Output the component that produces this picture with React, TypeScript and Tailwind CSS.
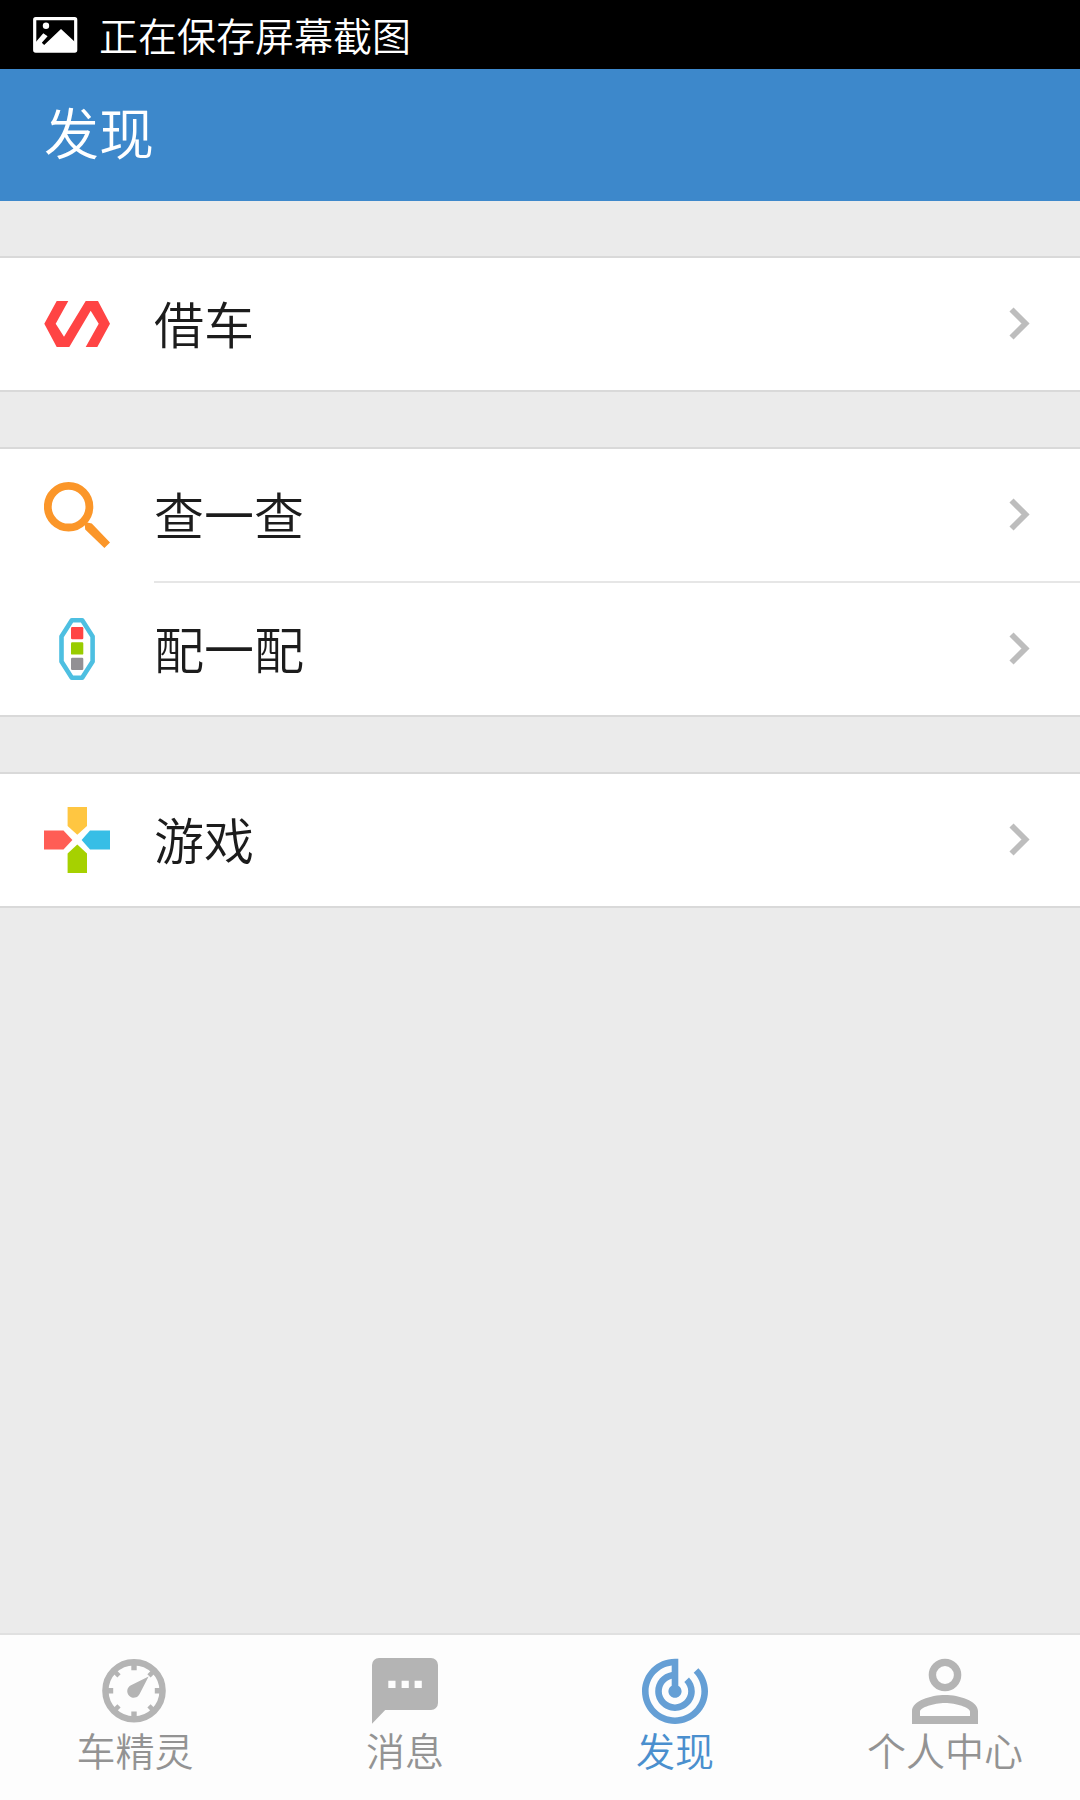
import type { ReactNode } from 'react'
import clsx from 'clsx'

function PictureIcon() {
    return (
        <svg width="45" height="36" viewBox="0 0 45 36" fill="none">
            <rect x="1.7" y="1.7" width="41" height="32.4" rx="1" stroke="white" strokeWidth="3.2" />
            <circle cx="13" cy="8.8" r="3.2" fill="white" />
            <path d="M2 26L10.3 16.3L14.6 19.2L8.8 25.8L11.2 28L28 12L42 25V34H2Z" fill="white" />
        </svg>
    )
}

function BorrowIcon() {
    return (
        <svg width="66" height="66" viewBox="0 0 66 66" fill="#ff4444">
            <path d="M.3 32.7L12.7 10H24.3L11.7 32.7L20 45.7L41.7 10H54L66 32.7L53.3 56H41.7L54.7 32.7L46.7 19.7L25.3 56H12.7Z" />
        </svg>
    )
}

function SearchIcon() {
    return (
        <svg width="66" height="66" viewBox="0 0 66 66">
            <circle cx="24.6" cy="24.7" r="20.8" fill="none" stroke="#fb9629" strokeWidth="7.8" />
            <path d="M39 36L43.3 40.6L47.8 41.4L66 60.6L60.4 66L41.2 47.4L40.8 43L36 39Z" fill="#fb9629" />
        </svg>
    )
}

function MatchIcon() {
    return (
        <svg width="66" height="66" viewBox="0 0 66 66">
            <path d="M27.8 4.2H38.2L48.6 20.5V45.5L38.2 61.8H27.8L17.5 45.5V20.5Z" fill="none" stroke="#4dbfe1" strokeWidth="4.6" strokeLinejoin="round" />
            <rect x="27" y="11" width="12.3" height="12.3" rx="1.2" fill="#ff4444" />
            <rect x="27" y="26.3" width="12.3" height="12.3" rx="1.2" fill="#99cc00" />
            <rect x="27" y="41.7" width="12.3" height="12.3" rx="1.2" fill="#929094" />
        </svg>
    )
}

function GameIcon() {
    return (
        <svg width="66" height="66" viewBox="0 0 66 66">
            <path d="M23.6 0H43V19L33.3 27.8L23.6 19Z" fill="#ffc641" />
            <path d="M0 23.4H19.5L28.4 33L19.5 42.4H0Z" fill="#ff5d55" />
            <path d="M66 23.4H46L37.6 33L46 42.4H66Z" fill="#37bee6" />
            <path d="M23.6 66H43V46.5L33.3 37.6L23.6 46.5Z" fill="#a6d100" />
        </svg>
    )
}

function Chevron() {
    return (
        <svg width="24" height="36" viewBox="0 0 24 36" fill="none">
            <path d="M3.5 3.5L17.5 17.5L3.5 31.5" stroke="#bdbdbd" strokeWidth="5.8" />
        </svg>
    )
}

function GaugeIcon() {
    return (
        <svg width="66" height="66" viewBox="0 0 66 66">
            <circle cx="32" cy="32.8" r="28.6" fill="none" stroke="currentColor" strokeWidth="6.4" />
            <path d="M32 6V12.2M32 53.4V60M5 32.8H11.2M52.8 32.8H59" stroke="currentColor" strokeWidth="5.4" />
            <path d="M13 13.8L17 17.8M51 13.8L47 17.8M13 51.8L17 47.8M51 51.8L47 47.8" stroke="currentColor" strokeWidth="4.6" />
            <path d="M46.6 18.6L37.6 36A6.5 6.5 0 1 1 29 27.3Z" fill="currentColor" />
        </svg>
    )
}

function MessageIcon() {
    return (
        <svg width="66" height="66" viewBox="0 0 66 66">
            <path d="M7 0H59A7 7 0 0 1 66 7V45A7 7 0 0 1 59 52H13.2L0 65.7V7A7 7 0 0 1 7 0Z" fill="currentColor" />
            <path d="M16.3 22.7h7.2v7.2h-7.2zM29.6 22.7h7.2v7.2h-7.2zM42.6 22.7h7.2v7.2h-7.2z" fill="#fdfdfd" />
        </svg>
    )
}

function RadarIcon() {
    return (
        <svg width="66" height="66" viewBox="2 1.8 20 20.2" preserveAspectRatio="none" fill="currentColor">
            <path d="M19.07 4.93l-1.41 1.41C19.1 7.79 20 9.79 20 12c0 4.42-3.58 8-8 8s-8-3.58-8-8c0-4.08 3.05-7.44 7-7.93v2.02C8.16 6.57 6 9.03 6 12c0 3.31 2.69 6 6 6s6-2.69 6-6c0-1.66-.67-3.16-1.76-4.24l-1.41 1.41C15.55 9.9 16 10.9 16 12c0 2.21-1.79 4-4 4s-4-1.79-4-4c0-1.86 1.28-3.41 3-3.86v2.14c-.6.35-1 .98-1 1.72 0 1.1.9 2 2 2s2-.9 2-2c0-.74-.4-1.38-1-1.72V2h-1C6.48 2 2 6.48 2 12s4.48 10 10 10 10-4.48 10-10c0-2.76-1.12-5.26-2.93-7.07z" />
        </svg>
    )
}

function PersonIcon() {
    return (
        <svg width="66" height="66" viewBox="0 0 66 66" fill="currentColor">
            <circle cx="33" cy="17" r="12.6" fill="none" stroke="currentColor" strokeWidth="7.4" />
            <path fillRule="evenodd" d="M0 66V53C0 43 19 37 33 37S66 43 66 53V66ZM8 58H58V53.5C58 49.5 44 45 33 45S8 49.5 8 53.5Z" />
        </svg>
    )
}

function Row({ icon, label }: { icon: ReactNode; label: string }) {
    return (
        <button className="flex h-[132px] w-full items-center pl-11 pr-12 text-left">
            {icon}
            <span className="ml-11 flex-1 pb-[5px] text-[50px] leading-[66px] text-[#1c1c1c]">{label}</span>
            <Chevron />
        </button>
    )
}

function Group({ children }: { children: ReactNode }) {
    return <section className="border-y-2 border-[#d9d9d9] bg-white">{children}</section>
}

const tabs = [
    { label: '车精灵', icon: <GaugeIcon /> },
    { label: '消息', icon: <MessageIcon /> },
    { label: '发现', icon: <RadarIcon />, active: true },
    { label: '个人中心', icon: <PersonIcon /> },
]

export default function App() {
    return (
        <div className="flex h-[1800px] w-[1080px] flex-col overflow-hidden bg-[#ebebeb] font-['Noto_Sans_CJK_SC',sans-serif] font-[350]">
            {/* Status bar */}
            <div className="flex h-[69px] shrink-0 items-center bg-black pl-[33px] text-white">
                <PictureIcon />
                <span className="ml-[21px] pb-0.5 text-[39px] leading-[60px]">正在保存屏幕截图</span>
            </div>

            <header className="flex h-[132px] shrink-0 items-center bg-[#3d88cb] pl-11 text-white">
                <h1 className="pb-2.5 text-[55px] leading-[80px]">发现</h1>
            </header>

            <main className="flex flex-1 flex-col gap-[55px] pt-[55px]">
                <Group>
                    <Row icon={<BorrowIcon />} label="借车" />
                </Group>
                <Group>
                    <Row icon={<SearchIcon />} label="查一查" />
                    <div className="ml-[154px] h-0.5 bg-[#e6e6e6]" />
                    <Row icon={<MatchIcon />} label="配一配" />
                </Group>
                <Group>
                    <Row icon={<GameIcon />} label="游戏" />
                </Group>
            </main>

            {/* Bottom tabs */}
            <nav className="grid h-[167px] shrink-0 grid-cols-4 border-t-2 border-[#e0e0e0] bg-[#fdfdfd]">
                {tabs.map((tab) => (
                    <button key={tab.label} className="flex flex-col items-center pt-[23px]">
                        <span className={clsx(tab.active ? 'text-[#659fd5]' : 'text-[#b4b4b4]')}>{tab.icon}</span>
                        <span className={clsx('text-[39px] leading-[51px]', tab.active ? 'text-[#4a8fce]' : 'text-[#939393]')}>
                            {tab.label}
                        </span>
                    </button>
                ))}
            </nav>
        </div>
    )
}
